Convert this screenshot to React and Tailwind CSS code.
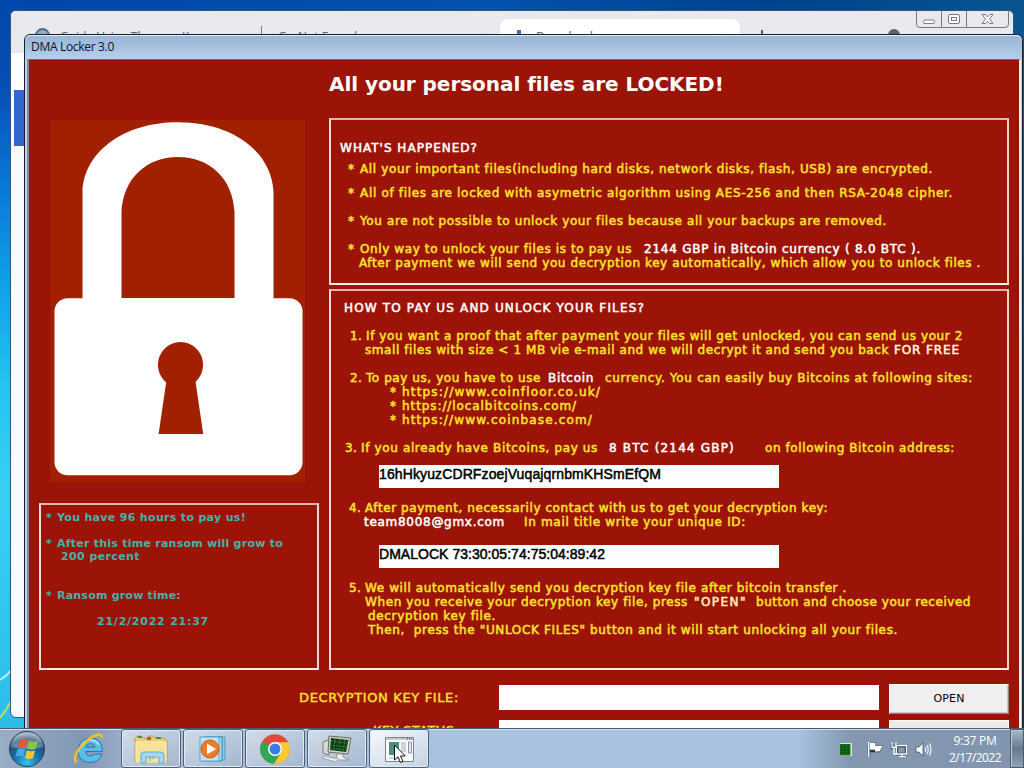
import { useLayoutEffect, useRef, useState } from "react";

// One run of text, spaced so that it fills exactly w pixels
const T = ({ w, className = "", children }) => {
  const ref = useRef(null);
  const [spacing, setSpacing] = useState(0);

  useLayoutEffect(() => {
    const el = ref.current;
    el.style.letterSpacing = "0px";
    const natural = el.getBoundingClientRect().width;
    setSpacing((w - natural) / el.textContent.length);
    el.style.letterSpacing = `${(w - natural) / el.textContent.length}px`;
  }, [w, children]);

  return (
    <span ref={ref} className={`shrink-0 whitespace-pre ${className}`} style={{ letterSpacing: `${spacing}px` }}>
      {children}
    </span>
  );
};

const Line = ({ className = "", children }) => (
  <div className={`flex h-3.5 leading-[14px] ${className}`}>{children}</div>
);

const Panel = ({ className = "", children }) => (
  <section className={`border-2 border-t-[#e3b5ae] border-l-[#f3dcd8] border-r-[#f0d4cf] border-b-[#fbeeec] ${className}`}>
    {children}
  </section>
);

const Lock = () => (
  <svg className="ml-[11px] block h-[362px] w-[255px] bg-[#a02000]" viewBox="50 120 255 362">
    <path
      fill="#fff"
      fillRule="evenodd"
      d="M82.5 300V192C84 153 122 122.300 178 122.300S272 153 273.500 192V300ZM121.500 298H234.500V212C233 179 210 157 178 157S123 179 121.500 212Z"
    />
    <rect x="54.500" y="298.300" width="248" height="177" rx="13" fill="#fff" />
    <ellipse cx="180.500" cy="364.800" rx="22.600" ry="22.800" fill="#a02000" />
    <path d="M166.500 380H195.300L203.200 434H158.600Z" fill="#a02000" />
  </svg>
);

const Happened = () => (
  <Panel className="h-[167px] pt-[21px]">
    <Line className="pl-[9px] text-white"><T w={138}>WHAT'S HAPPENED?</T></Line>
    <Line className="mt-[7px] pl-[17px]">
      <T w={12}>* </T><T w={573}>All your important files(including hard disks, network disks, flash, USB) are encrypted.</T>
    </Line>
    <Line className="mt-2.5 pl-[17px]">
      <T w={12}>* </T><T w={593}>All of files are locked with asymetric algorithm using AES-256 and then RSA-2048 cipher.</T>
    </Line>
    <Line className="mt-3.5 pl-[17px]">
      <T w={12}>* </T><T w={527}>You are not possible to unlock your files because all your backups are removed.</T>
    </Line>
    <Line className="mt-3.5 pl-[17px]">
      <T w={12}>* </T><T w={272}>Only way to unlock your files is to pay us</T>
      <T w={277} className="ml-3 text-white">2144 GBP in Bitcoin currency ( 8.0 BTC ).</T>
    </Line>
    <Line className="pl-[28px]">
      <T w={622}>After payment we will send you decryption key automatically, which allow you to unlock files .</T>
    </Line>
  </Panel>
);

const Copyable = ({ className, w, children }) => (
  <div className={`ml-12 h-[23px] w-[400px] bg-white pt-px font-['Liberation_Sans'] text-[14px] leading-4 text-black ${className}`}>
    <T w={w}>{children}</T>
  </div>
);

const HowToPay = () => (
  <Panel className="mt-1 h-[381px] pt-2.5">
    <Line className="pl-[13px] text-white"><T w={301}>HOW TO PAY US AND UNLOCK YOUR FILES?</T></Line>
    <Line className="mt-3.5 pl-[19px]">
      <T w={16}>1. </T><T w={597}>If you want a proof that after payment your files will get unlocked, you can send us your 2</T>
    </Line>
    <Line className="pl-[34px]">
      <T w={524}>{"small files with size < 1 MB vie e-mail and we will decrypt it and send you back"}</T>
      <T w={66} className="ml-[5px] text-[#fff8dc]">FOR FREE</T>
    </Line>
    <Line className="mt-3.5 pl-[19px]">
      <T w={16}>2. </T><T w={175}>To pay us, you have to use</T>
      <T w={46} className="ml-[7px] text-white">Bitcoin</T>
      <T w={368} className="ml-[11px]">currency. You can easily buy Bitcoins at following sites:</T>
    </Line>
    <Line className="pl-[59px]"><T w={12}>* </T><T w={199}>https://www.coinfloor.co.uk/</T></Line>
    <Line className="pl-[59px]"><T w={12}>* </T><T w={175}>https://localbitcoins.com/</T></Line>
    <Line className="pl-[59px]"><T w={12}>* </T><T w={191}>https://www.coinbase.com/</T></Line>
    <Line className="mt-3.5 pl-[14px]">
      <T w={16}>3. </T><T w={237}>If you already have Bitcoins, pay us</T>
      <T w={126} className="ml-[11px] text-white">8 BTC (2144 GBP)</T>
      <T w={190} className="ml-[30px]">on following Bitcoin address:</T>
    </Line>
    <Copyable className="mt-2.5" w={282}>16hHkyuzCDRFzoejVuqajqrnbmKHSmEfQM</Copyable>
    <Line className="mt-[13px] pl-[18px]">
      <T w={16}>4. </T><T w={463}>After payment, necessarily contact with us to get your decryption key:</T>
    </Line>
    <Line className="pl-[33px]">
      <T w={141} className="text-white">team8008@gmx.com</T>
      <T w={222} className="ml-[19px]">In mail title write your unique ID:</T>
    </Line>
    <Copyable className="mt-4" w={226}>DMALOCK 73:30:05:74:75:04:89:42</Copyable>
    <Line className="mt-[13px] pl-[18px]">
      <T w={16}>5. </T><T w={482}>We will automatically send you decryption key file after bitcoin transfer .</T>
    </Line>
    <Line className="pl-[34px]">
      <T w={323}>When you receive your decryption key file, press</T>
      <T w={53} className="ml-[6px] text-[#fff4b8]">"OPEN"</T>
      <T w={215} className="ml-[9px]">button and choose your received</T>
    </Line>
    <Line className="pl-[37px]"><T w={128}>decryption key file.</T></Line>
    <Line className="pl-[37px]">
      <T w={530}>{'Then,  press the "UNLOCK FILES" button and it will start unlocking all your files.'}</T>
    </Line>
  </Panel>
);

const Deadline = () => (
  <Panel className="mt-[21px] h-[167px] pt-[6px] text-[11px] font-bold text-[#42b3a8]">
    <Line className="pl-[5px]"><T w={11}>* </T><T w={189}>You have 96 hours to pay us!</T></Line>
    <Line className="mt-3 pl-[5px]"><T w={11}>* </T><T w={226}>After this time ransom will grow to</T></Line>
    <Line className="-mt-px pl-[20px]"><T w={79}>200 percent</T></Line>
    <Line className="mt-[25px] pl-[5px]"><T w={11}>* </T><T w={124}>Ransom grow time:</T></Line>
    <Line className="mt-3 pl-[56px]"><T w={112}>21/2/2022 21:37</T></Line>
  </Panel>
);

const Dialog = () => (
  <div className="absolute top-[34px] left-6 h-[740px] w-[999px] rounded-t-md border border-[#16202e] bg-[#c3d5ea]">
    <div className="h-[24px] rounded-t-md border-t border-[#e4eefa] bg-gradient-to-b from-[#9ab4d5] to-[#b5d0ea] pl-1.5 font-['Open_Sans'] text-xs leading-[22px] text-[#08122a]">
      <T w={83}>DMA Locker 3.0</T>
    </div>
    <div className="mr-px ml-0.5 h-[715px] border-t border-r-2 border-l-2 border-t-[#6f6674] border-r-[#eef2f8] border-l-[#8d8391] bg-[#9c1408] pt-[9px] pr-[9px] pl-2.5 font-['DejaVu_Sans'] text-xs text-[#fae32c]">
      <h1 className="pl-[290px] text-[20px] leading-[30px] font-bold text-white"><T w={394}>All your personal files are LOCKED!</T></h1>
      <div className="mt-[19px] flex gap-2.5">
        <div className="w-[280px] shrink-0 pt-0.5">
          <Lock />
          <Deadline />
        </div>
        <div className="w-[680px] shrink-0 [-webkit-text-stroke:0.5px]">
          <Happened />
          <HowToPay />
        </div>
      </div>
      <div className="mt-3.5 flex gap-2.5">
        <div className="flex h-[29px] w-[450px] shrink-0 items-start justify-end pr-[30px] text-[13px] leading-[27px] [-webkit-text-stroke:0.4px]">
          <T w={160}>DECRYPTION KEY FILE:</T>
        </div>
        <div className="mt-px h-[25px] w-[380px] shrink-0 bg-white" />
        <button className="h-[30px] w-[120px] shrink-0 border border-t-white border-r-[#8c8583] border-b-[#8c8583] border-l-white bg-[#efefef] text-[11px] text-black shadow-[inset_-1px_-1px_#c9c5c3]">
          <T w={31}>OPEN</T>
        </button>
      </div>
      <div className="mt-1.5 flex gap-2.5">
        <div className="flex h-[29px] w-[450px] shrink-0 justify-end pr-[30px] text-[13px] leading-[22px] [-webkit-text-stroke:0.4px]">
          <T w={86}>KEY STATUS:</T>
        </div>
        <div className="h-[25px] w-[380px] shrink-0 bg-white" />
        <div className="h-[30px] w-[120px] shrink-0 border border-white bg-[#efebe4]" />
      </div>
    </div>
  </div>
);

const Browser = () => (
  <div className="absolute top-[10px] left-[10px] h-[708px] w-[1004px] overflow-hidden rounded-md border border-[#31547f] bg-[#f8fafc]">
    <div className="relative flex h-[42px] bg-[#e7e9ec] font-['Open_Sans'] text-xs text-[#5d6166]">
      <div className="mt-[17px] ml-[24px] h-[15px] w-[15px] rounded-full border-2 border-[#536d89] bg-[#8fafc4]" />
      <span className="mt-[18px] ml-2.5 w-[122px] leading-4 whitespace-pre">Guide Using Thou</span>
      <span className="mt-[18px] w-[62px] leading-4">Key</span>
      <span className="mt-[14px] w-[7px] text-base leading-6">×</span>
      <div className="mt-[15px] ml-[10px] h-5 w-px bg-[#777b80]" />
      <span className="mt-[18px] ml-4 w-5 leading-4">G</span>
      <span className="mt-[18px] w-[181px] leading-4">Not Found</span>
      <span className="mt-[14px] text-base leading-6">×</span>
      <div className="absolute top-2 left-[489px] flex h-8 w-[240px] rounded-t-lg bg-white pl-[17px]">
        <div className="mt-[11px] h-4 w-1 bg-[#3c78bd]" />
        <span className="mt-[10px] ml-[15px] w-[182px] leading-4">Downloads</span>
        <span className="mt-[6px] text-base leading-6">×</span>
      </div>
      <div className="absolute top-[19px] left-[750px] h-3 w-0.5 bg-[#5b5f64]" />
      <div className="absolute top-[18px] left-[877px] h-3 w-3 rounded-full bg-[#5f6368]" />
      <svg className="absolute -top-px left-[905px]" width="94" height="19" fill="none" stroke="#777c84">
        <path d="M.5 0V14Q.5 17.500 4 17.500H89Q92.500 17.500 92.500 14V0M25.500 0V17.500M50.500 0V17.500" />
        <rect x="7.500" y="10" width="11" height="3.500" rx="1.500" fill="#fff" />
        <rect x="32.500" y="4.500" width="11" height="9" rx="1.500" fill="#fff" />
        <rect x="35.500" y="7.500" width="5" height="3" />
        <path fill="#fff" d="M66 4.500H69.500L71.500 7L73.500 4.500H77L73.500 9L77 13.500H73.500L71.500 11L69.500 13.500H66L69.500 9Z" />
      </svg>
    </div>
    <div className="h-[37px] bg-white" />
    <div className="ml-[3px] h-14 bg-[#3067d1]" />
  </div>
);

const StartOrb = () => (
  <svg className="ml-2 h-[38px] w-[38px]" viewBox="0 0 38 38">
    <defs>
      <radialGradient id="orb" cx="50%" cy="90%" r="85%">
        <stop offset="0" stopColor="#35c5ef" />
        <stop offset=".45" stopColor="#176da8" />
        <stop offset=".8" stopColor="#29506f" />
        <stop offset="1" stopColor="#8ba5bb" />
      </radialGradient>
    </defs>
    <circle cx="19" cy="19" r="17.500" fill="url(#orb)" stroke="#244561" />
    <path d="M3 17Q5 3 19 2.500T35 17Q19 21 3 17" fill="#fff" opacity=".28" />
    <path d="M12 10.500Q15.500 8 19.500 10L17.500 18Q14 16 9.500 18Z" fill="#e8592b" />
    <path d="M21 10.800Q24.500 13 30 11L27.500 19Q23 20.500 19 18.500Z" fill="#8cc63f" />
    <path d="M9.200 19.500Q13 17.500 17.200 19.500L15.500 27Q11.500 25 7.500 27Z" fill="#48a9e6" />
    <path d="M18.700 20.200Q22.500 22 27 20.500L25 28Q21 30 17 28Z" fill="#fdc730" />
  </svg>
);

const IeIcon = () => (
  <svg className="ml-[27px] h-8 w-8" viewBox="0 0 32 32">
    <path d="M29.500 18.500H12.500Q13 23 17.500 23Q20.500 23 22 21H29Q26 29.500 17 29.500Q5 29 5 17.500Q6 5.500 17.500 5Q29.500 5.500 29.500 18.500M12.700 14.200H22Q21.500 10.500 17.500 10.500T12.700 14.200" fill="#58bfea" stroke="#2379b6" fillRule="evenodd" />
    <path d="M8 13Q12 7 17.500 7T26 12" fill="none" stroke="#b6e8fa" strokeWidth="1.500" />
    <path d="M3.500 29.500Q-1 25 7 15Q17 3 25 1.800Q29 1.500 28.500 5" fill="none" stroke="#efc02c" strokeWidth="2.600" />
  </svg>
);

const FolderIcon = () => (
  <svg className="h-8 w-9" viewBox="0 0 36 32">
    <path d="M2 6L4 3H8L10 5H15L16 3H20L22 5H31L34 8V29H2Z" fill="#e9cc72" stroke="#b99b49" />
    <path d="M5 4H9M14 6H18M23 5H28" stroke="#3c9446" strokeWidth="2" />
    <path d="M14 5H18" stroke="#d25435" strokeWidth="2" />
    <path d="M3 9H33V29H3Z" fill="#f6e296" stroke="#fff3bd" />
    <path d="M8 30V22Q8 19 11 19H27Q31 19 31 22V30H26V24H13V30Z" fill="#a3d8ee" stroke="#62a9cf" />
    <path d="M17 24V28M20 24V26" stroke="#4b9fc8" />
  </svg>
);

const PlayerIcon = () => (
  <svg className="h-8 w-9" viewBox="0 0 36 32">
    <path d="M12 4H30V27H12Z" fill="#8ac5e2" stroke="#4f9bc5" />
    <path d="M8 4H27V28H8Z" fill="#a8d9ee" stroke="#3d86b0" />
    <path d="M5 4H24V28H5Z" fill="#bfe5f5" stroke="#5ca7cc" />
    <circle cx="15" cy="16" r="9" fill="#ee7c28" stroke="#c75d16" />
    <path d="M12 10.500L21 16L12 21.500Z" fill="#fff" />
  </svg>
);

const ChromeIcon = () => (
  <svg className="h-8 w-8" viewBox="0 0 32 32">
    <circle cx="16" cy="16" r="14.800" fill="#e04a3d" />
    <path d="M16 16L3.200 8.600A14.800 14.800 0 0 0 15 30.800L22.400 19.500Z" fill="#2ea853" />
    <path d="M16 9.200H29.200A14.800 14.800 0 0 1 15 30.800L22 19.500Z" fill="#fcc934" />
    <circle cx="16" cy="16" r="7" fill="#fff" />
    <circle cx="16" cy="16" r="5.500" fill="#3979e8" />
  </svg>
);

const MonitorIcon = () => (
  <svg className="h-8 w-9" viewBox="0 0 36 32">
    <path d="M4 9L10 7V22L4 20Z" fill="#d8d9d4" stroke="#757d79" />
    <path d="M10 3L32 5L29 21L9 19Z" fill="#cbd0c6" stroke="#697165" />
    <path d="M12 5L29.500 7L27 19L11 17Z" fill="#143c19" />
    <path d="M12 8L29 10M11 12L28 14M11 15L28 17M16 6L15 18M21 6L20 18M26 7L24 19" stroke="#33843a" strokeDasharray="2 1" />
    <path d="M18 21H24V24L30 27L17 27Z" fill="#eef0ed" stroke="#949a95" />
    <path d="M5 23L20 26L17 29L3 25Z" fill="#eceeec" stroke="#9ea3a2" />
  </svg>
);

const AppIcon = () => (
  <svg className="h-8 w-9" viewBox="0 0 36 32">
    <path d="M4.500 4.500H32.500V28.500H4.500Z" fill="#fbfbfb" stroke="#7c828d" />
    <path d="M5 5H32V7H5Z" fill="#c2cad4" />
    <path d="M26 6H31" stroke="#31363c" strokeDasharray="1 1" />
    <path d="M8 9H18V22H8Z" fill="#45917d" />
    <path d="M20 10H25M20 12H25M20 14H25M20 16H25M20 18H25" stroke="#a6aaae" />
    <path d="M27.500 9H30.500V20H27.500Z" fill="#e1e6eb" stroke="#8b949c" />
    <path d="M8 25H20" stroke="#b3b6b9" />
  </svg>
);

const TaskButton = ({ active, children }) => (
  <div
    className={`flex h-[39px] w-[60px] items-center justify-center rounded-[3px] border border-[#4e5f76] shadow-[inset_0_0_0_1px_#dfebf7] ${
      active ? "bg-gradient-to-br from-[#f6f9fc] to-[#c4d3e4]" : "bg-gradient-to-br from-[#d3dce9] to-[#a3b7d0]"
    }`}
  >
    {children}
  </div>
);

const Tray = () => (
  <svg className="h-5 w-[94px]" viewBox="0 0 94 20">
    <rect x="1" y="4" width="12" height="13" fill="#dce8df" />
    <rect x="1" y="5" width="10.500" height="11.500" fill="#157718" />
    <path d="M3 5V16M6 5V16M9 5V16M1 8H11M1 11H11M1 14H11" stroke="#0b4810" strokeWidth=".8" />
    <g fill="none" stroke="#27384c" strokeWidth="2.400">
      <path d="M30 4V18M31 5H36V8H42L40 12H31" />
      <path d="M58 7H67V15H58ZM60 17H66M53 5V9H58V5" />
    </g>
    <path d="M29 3H30.500V18H29ZM31 4H36.500V7H43.500L40.500 12.500H36V10.500H31Z" fill="#fff" />
    <path d="M57.500 6.500H67.500V15H57.500ZM60 17.500H66.500M63 15V17M53 3.500V8.500H57V3.500M55 8.500V15H58" fill="none" stroke="#fff" strokeWidth="1.300" />
    <path d="M77 8H80L84 4V17L80 13H77Z" fill="#fff" stroke="#33465a" strokeWidth=".7" />
    <path d="M86 8Q87.500 10.500 86 13M88 6Q90.500 10.500 88 15M90.500 4.500Q93.500 10.500 90.500 16.500" fill="none" stroke="#f2f6fa" strokeWidth="1.200" />
  </svg>
);

const Taskbar = () => (
  <div className="absolute inset-x-0 bottom-0 flex h-10 items-center border-t border-[#4b5b72] bg-[linear-gradient(90deg,#9aadc6_0%,#8297b3_8%,#aabdd7_15%,#a8c2df_42%,#a8c2df_78%,#8397b1_83%,#8295ae_100%)] shadow-[inset_0_1px_#d1e0f0]">
    <StartOrb />
    <IeIcon />
    <div className="ml-4 flex gap-0.5">
      <TaskButton><FolderIcon /></TaskButton>
      <TaskButton><PlayerIcon /></TaskButton>
      <TaskButton><ChromeIcon /></TaskButton>
      <TaskButton><MonitorIcon /></TaskButton>
      <TaskButton active><AppIcon /></TaskButton>
    </div>
    <div className="ml-auto flex h-full items-center font-['Open_Sans'] text-xs text-white">
      <Tray />
      <div className="ml-3.5 flex w-[56px] flex-col items-center leading-[17px]">
        <T w={43}>9:37 PM</T>
        <T w={52}>2/17/2022</T>
      </div>
      <div className="ml-[7px] h-full w-[14px] border border-[#4c5b6d] bg-gradient-to-b from-[#a9b8c7] via-[#6a7a8d] to-[#90a0b3] shadow-[inset_1px_1px_#bdcad7]" />
    </div>
  </div>
);

const Pointer = () => (
  <svg className="absolute top-[744px] left-[393px]" width="14" height="22" viewBox="0 0 14 22">
    <path d="M1.500 1V16L5 12.800L7.500 18.500L10 17.400L7.500 12H12.300Z" fill="#fff" stroke="#111" />
  </svg>
);

const App = () => {
  return (
    <div className="relative h-[768px] w-[1024px] overflow-hidden bg-[linear-gradient(90deg,#0046ab_0%,#0352ac_48%,#00428e_75%,#0a5490_100%)]">
      <div className="absolute top-0 left-0 h-[728px] w-6 bg-[linear-gradient(180deg,#0048ab_0%,#084fb5_12%,#0a76d6_25%,#10a3ea_40%,#26c3f0_53%,#37d0f3_68%,#2bbde8_100%)]" />
      <div className="absolute top-[100px] right-0 h-[628px] w-1 bg-gradient-to-b from-[#0a5a94] to-[#083c60]" />
      <svg className="absolute top-[660px] left-0" width="12" height="68" fill="none">
        <path d="M0 20Q7 16 12 9" stroke="#b9effb" strokeWidth="2" />
        <path d="M0 58Q7 50 12 39" stroke="#b8df63" strokeWidth="2" />
      </svg>
      <Browser />
      <Dialog />
      <Taskbar />
      <Pointer />
    </div>
  );
};

export default App;
